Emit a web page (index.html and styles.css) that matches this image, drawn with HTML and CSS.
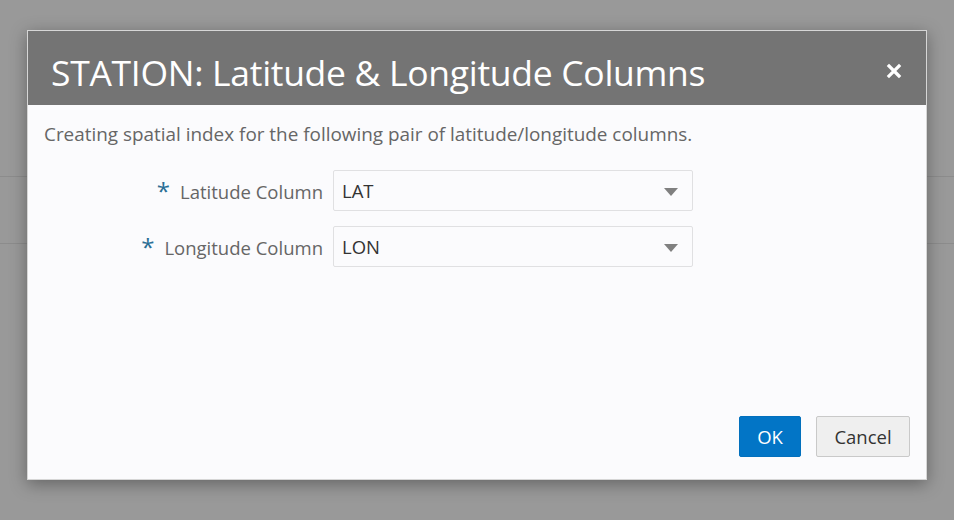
FILE: index.html
```html
<!DOCTYPE html>
<html>
<head>
<meta charset="utf-8">
<link rel="stylesheet" href="styles.css">
</head>
<body>
<div class="backdrop">
  <div class="bg-band"></div>
  <div class="dialog">
    <div class="header">
      <h1 class="title">STATION: Latitude &amp; Longitude Columns</h1>
      <button class="close" aria-label="Close">
        <svg width="16" height="16" viewBox="0 0 16 16"><path d="M3 3 L13 13 M13 3 L3 13" stroke="#fff" stroke-width="3.2" stroke-linecap="square"/></svg>
      </button>
    </div>
    <div class="body">
      <p class="desc">Creating spatial index for the following pair of latitude/longitude columns.</p>
      <div class="form">
        <div class="row">
          <label class="label"><span class="req">*</span>Latitude Column</label>
          <div class="select"><span class="value">LAT</span><span class="caret"></span></div>
        </div>
        <div class="row">
          <label class="label"><span class="req">*</span>Longitude Column</label>
          <div class="select"><span class="value">LON</span><span class="caret"></span></div>
        </div>
      </div>
    </div>
    <div class="footer">
      <button class="btn btn-primary">OK</button>
      <button class="btn btn-default">Cancel</button>
    </div>
  </div>
</div>
</body>
</html>
```

FILE: styles.css
```css
html, body {
  margin: 0;
  padding: 0;
  height: 100%;
}
body {
  background: #999999;
  font-family: "Open Sans", "Noto Sans", sans-serif;
  overflow: hidden;
}
.backdrop {
  position: relative;
  width: 954px;
  height: 520px;
}
.bg-band {
  position: absolute;
  left: 0;
  right: 0;
  top: 176px;
  height: 66px;
  border-top: 1px solid #8c8c8c;
  border-bottom: 1px solid #8c8c8c;
}
.dialog {
  position: absolute;
  left: 27px;
  top: 30px;
  width: 898px;
  height: 448px;
  border: 1px solid #d6d6d6;
  background: #fbfbfd;
  box-shadow: 0 4px 16px rgba(0,0,0,0.35);
  display: flex;
  flex-direction: column;
}
.header {
  background: #747474;
  height: 74px;
  display: flex;
  align-items: center;
  justify-content: space-between;
  padding: 0 23px 0 23px;
  flex: none;
}
.title {
  margin: 8px 0 0 0;
  color: #ffffff;
  font-weight: normal;
  font-size: 35.5px;
  letter-spacing: -0.3px;
  line-height: 40px;
}
.close {
  background: none;
  border: none;
  padding: 0;
  margin-top: 6px;
  width: 18px;
  height: 18px;
  display: flex;
  align-items: center;
  justify-content: center;
}
.body {
  flex: 1;
  padding: 0 16px;
}
.desc {
  margin: 17px 0 0 0;
  font-size: 18.9px;
  line-height: 24px;
  color: #666666;
}
.form {
  margin-top: 24px;
  display: flex;
  flex-direction: column;
  gap: 15px;
}
.row {
  display: flex;
  align-items: center;
}
.label {
  width: 279px;
  text-align: right;
  padding-right: 10px;
  font-size: 18.5px;
  color: #666666;
}
.req {
  color: #2a6e95;
  font-size: 24px;
  margin-right: 10px;
  vertical-align: -1px;
}
.select {
  width: 360px;
  height: 41px;
  box-sizing: border-box;
  border: 1px solid #e0e0e2;
  border-radius: 2px;
  background: #fbfbfd;
  display: flex;
  align-items: center;
  justify-content: space-between;
  padding: 0 14px 0 8px;
}
.value {
  font-size: 18.5px;
  color: #333333;
}
.caret {
  width: 0;
  height: 0;
  border-left: 7px solid transparent;
  border-right: 7px solid transparent;
  border-top: 8px solid #808080;
  margin-top: 2px;
}
.footer {
  flex: none;
  display: flex;
  justify-content: flex-end;
  gap: 15px;
  padding: 0 16px 22px 0;
}
.btn {
  height: 41px;
  font-family: inherit;
  font-size: 18.5px;
  border-radius: 2px;
  cursor: pointer;
  padding: 0;
}
.btn-primary {
  width: 62px;
  background: #0275c6;
  color: #ffffff;
  border: 1px solid #0270bd;
}
.btn-default {
  width: 94px;
  background: #efefef;
  color: #333333;
  border: 1px solid #c9c9c9;
}
```
